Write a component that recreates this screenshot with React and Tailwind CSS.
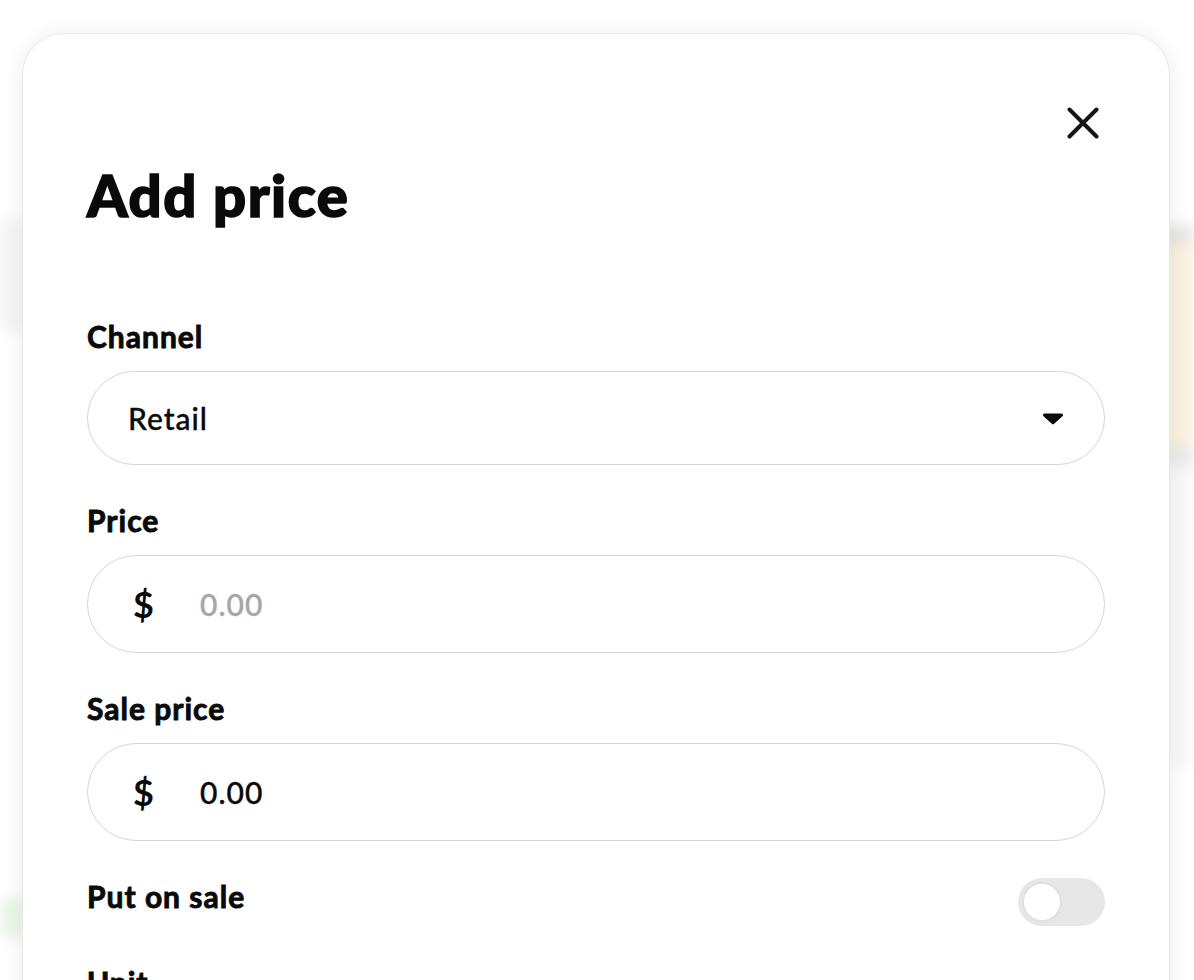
import { useState } from "react";

function CloseIcon() {
  return (
    <svg width="32" height="32" viewBox="0 0 32 32" fill="none">
      <path d="M2.5 2.5L29.5 29.5M29.5 2.5L2.5 29.5" stroke="#151515" strokeWidth="4" strokeLinecap="round" />
    </svg>
  );
}

function Caret() {
  return (
    <svg width="22" height="13" viewBox="0 0 22 13">
      <path d="M2.5 1.5h17a1.6 1.6 0 0 1 1.2 2.6l-8.5 7.6a1.8 1.8 0 0 1-2.4 0L1.3 4.1A1.6 1.6 0 0 1 2.5 1.5z" fill="#0a0a0a" />
    </svg>
  );
}

const labelCls =
  "text-[30px] font-bold leading-none tracking-[1px] text-[#0a0a0a] [-webkit-text-stroke:0.9px_#0a0a0a]";
const valueCls = "text-[30px] font-medium tracking-[1px] [-webkit-text-stroke:0.35px_currentColor]";

function MoneyInput({ value, placeholder }) {
  return (
    <div className="flex h-[98px] items-center rounded-full border-[1.5px] border-[#d6d6d6] pl-[45px] pr-10">
      <span className="w-[67px] text-[36px] font-bold leading-none text-[#0a0a0a]">$</span>
      <span className={value ? valueCls + " text-[#0a0a0a]" : valueCls + " text-[#a6a6a6]"}>
        {value || placeholder}
      </span>
    </div>
  );
}

export default function App() {
  const [onSale, setOnSale] = useState(false);

  return (
    <div className="relative h-[980px] w-full overflow-hidden bg-white" style={{ fontFamily: "Lato, 'Open Sans', sans-serif" }}>
      {/* blurred page behind the dialog */}
      <div className="flex h-full justify-between blur-[6px]">
        <div className="flex w-[60px] flex-col">
          <div className="mt-[218px] h-[115px] bg-[#f5f5f5]" />
          <div className="mt-[565px] h-[40px] bg-[#eaf6e8]" />
        </div>
        <div className="flex w-[70px] flex-col">
          <div className="mt-[225px] h-[20px] bg-[#e9e7e2]" />
          <div className="h-[200px] bg-[#f8f1de]" />
          <div className="h-[22px] bg-[#ebebe8]" />
          <div className="h-[300px] bg-[#f8f8f8]" />
        </div>
      </div>

      {/* dialog */}
      <div className="absolute left-[22px] top-[33px] w-[1148px] rounded-[42px] border border-[#e8e8e8] bg-white px-16 pt-[67px] pb-16 shadow-[0_0_22px_rgba(0,0,0,0.07)]">
        <div className="flex justify-end">
          <button className="flex h-11 w-11 items-center justify-center">
            <CloseIcon />
          </button>
        </div>

        <h1 className="mt-[21px] text-[58px] font-black leading-none tracking-[1.5px] text-[#0a0a0a] [-webkit-text-stroke:1.6px_#0a0a0a]">
          Add price
        </h1>

        <div className="mt-[97px] flex flex-col">
          <label className={labelCls}>Channel</label>
          <div className="mt-[20px] flex h-[94px] items-center justify-between rounded-full border-[1.5px] border-[#d6d6d6] pl-[40px] pr-[40px]">
            <span className={valueCls + " text-[#0a0a0a]"}>Retail</span>
            <Caret />
          </div>

          <label className={"mt-[40px] " + labelCls}>Price</label>
          <div className="mt-[20px]">
            <MoneyInput placeholder="0.00" />
          </div>

          <label className={"mt-[40px] " + labelCls}>Sale price</label>
          <div className="mt-[20px]">
            <MoneyInput value="0.00" />
          </div>

          <div className="mt-[37px] flex items-start justify-between">
            <label className={"mt-[3px] " + labelCls}>Put on sale</label>
            <button
              onClick={() => setOnSale(!onSale)}
              className="flex h-[48px] w-[87px] items-center rounded-full bg-[#e7e7e7] px-[4px]"
            >
              <span className="h-[40px] w-[40px] rounded-full border-2 border-[#e0e0e0] bg-white" />
            </button>
          </div>

          <label className={"mt-[41px] " + labelCls}>Unit</label>
          <div className="mt-[20px] flex h-[94px] items-center justify-between rounded-full border-[1.5px] border-[#d6d6d6] pl-[40px] pr-[40px]">
            <span className={valueCls + " text-[#0a0a0a]"}>Each</span>
            <Caret />
          </div>
        </div>
      </div>
    </div>
  );
}
